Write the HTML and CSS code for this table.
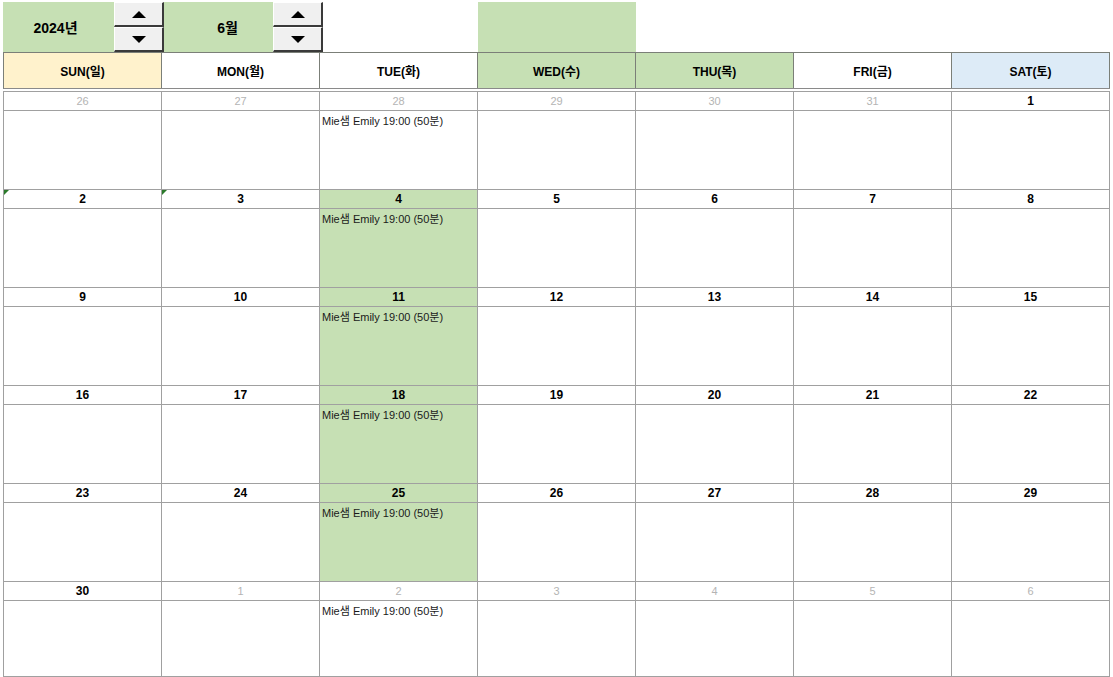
FILE: index.html
```html
<!DOCTYPE html>
<html lang="ko">
<head>
<meta charset="utf-8">
<title>Calendar</title>
<link rel="stylesheet" href="styles.css">
</head>
<body>
<div class="page">
  <div class="top">
    <div class="sel year">2024년</div>
    <div class="spin">
      <div class="btn"><span class="tri up"></span></div>
      <div class="btn"><span class="tri down"></span></div>
    </div>
    <div class="sel month">6월</div>
    <div class="spin">
      <div class="btn"><span class="tri up"></span></div>
      <div class="btn"><span class="tri down"></span></div>
    </div>
    <div class="spacer"></div>
    <div class="sel blank"></div>
  </div>

  <div class="days">
    <div class="day sun">SUN(일)</div>
    <div class="day">MON(월)</div>
    <div class="day">TUE(화)</div>
    <div class="day green">WED(수)</div>
    <div class="day green">THU(목)</div>
    <div class="day">FRI(금)</div>
    <div class="day sat">SAT(토)</div>
  </div>

  <div class="cal">
    <!-- week 1 -->
    <div class="cell"><div class="d other">26</div><div class="b"></div></div>
    <div class="cell"><div class="d other">27</div><div class="b"></div></div>
    <div class="cell"><div class="d other">28</div><div class="b"><span class="ev">Mie샘 Emily 19:00 (50분)</span></div></div>
    <div class="cell"><div class="d other">29</div><div class="b"></div></div>
    <div class="cell"><div class="d other">30</div><div class="b"></div></div>
    <div class="cell"><div class="d other">31</div><div class="b"></div></div>
    <div class="cell"><div class="d">1</div><div class="b"></div></div>
    <!-- week 2 -->
    <div class="cell"><div class="d mark">2</div><div class="b"></div></div>
    <div class="cell"><div class="d mark">3</div><div class="b"></div></div>
    <div class="cell hl"><div class="d">4</div><div class="b"><span class="ev">Mie샘 Emily 19:00 (50분)</span></div></div>
    <div class="cell"><div class="d">5</div><div class="b"></div></div>
    <div class="cell"><div class="d">6</div><div class="b"></div></div>
    <div class="cell"><div class="d">7</div><div class="b"></div></div>
    <div class="cell"><div class="d">8</div><div class="b"></div></div>
    <!-- week 3 -->
    <div class="cell"><div class="d">9</div><div class="b"></div></div>
    <div class="cell"><div class="d">10</div><div class="b"></div></div>
    <div class="cell hl"><div class="d">11</div><div class="b"><span class="ev">Mie샘 Emily 19:00 (50분)</span></div></div>
    <div class="cell"><div class="d">12</div><div class="b"></div></div>
    <div class="cell"><div class="d">13</div><div class="b"></div></div>
    <div class="cell"><div class="d">14</div><div class="b"></div></div>
    <div class="cell"><div class="d">15</div><div class="b"></div></div>
    <!-- week 4 -->
    <div class="cell"><div class="d">16</div><div class="b"></div></div>
    <div class="cell"><div class="d">17</div><div class="b"></div></div>
    <div class="cell hl"><div class="d">18</div><div class="b"><span class="ev">Mie샘 Emily 19:00 (50분)</span></div></div>
    <div class="cell"><div class="d">19</div><div class="b"></div></div>
    <div class="cell"><div class="d">20</div><div class="b"></div></div>
    <div class="cell"><div class="d">21</div><div class="b"></div></div>
    <div class="cell"><div class="d">22</div><div class="b"></div></div>
    <!-- week 5 -->
    <div class="cell"><div class="d">23</div><div class="b"></div></div>
    <div class="cell"><div class="d">24</div><div class="b"></div></div>
    <div class="cell hl"><div class="d">25</div><div class="b"><span class="ev">Mie샘 Emily 19:00 (50분)</span></div></div>
    <div class="cell"><div class="d">26</div><div class="b"></div></div>
    <div class="cell"><div class="d">27</div><div class="b"></div></div>
    <div class="cell"><div class="d">28</div><div class="b"></div></div>
    <div class="cell"><div class="d">29</div><div class="b"></div></div>
    <!-- week 6 -->
    <div class="cell last"><div class="d">30</div><div class="b"></div></div>
    <div class="cell last"><div class="d other">1</div><div class="b"></div></div>
    <div class="cell last"><div class="d other">2</div><div class="b"><span class="ev">Mie샘 Emily 19:00 (50분)</span></div></div>
    <div class="cell last"><div class="d other">3</div><div class="b"></div></div>
    <div class="cell last"><div class="d other">4</div><div class="b"></div></div>
    <div class="cell last"><div class="d other">5</div><div class="b"></div></div>
    <div class="cell last"><div class="d other">6</div><div class="b"></div></div>
  </div>
</div>
</body>
</html>
```

FILE: styles.css
```css
html, body {
  margin: 0;
  padding: 0;
  background: #ffffff;
}
body {
  font-family: "Liberation Sans", "Noto Sans CJK KR", Arial, sans-serif;
  color: #000;
  overflow: hidden;
}
.page {
  width: 1113px;
  height: 677px;
  overflow: hidden;
}

/* top selector row */
.top {
  display: flex;
  height: 50px;
  padding: 2px 0 0 3px;
}
.sel {
  background: #c6e0b4;
  display: flex;
  align-items: center;
  justify-content: center;
  font-weight: bold;
  font-size: 14px;
  box-sizing: border-box;
}
.year { width: 111px; padding-right: 6px; }
.month { width: 109px; padding-left: 18px; }
.blank { width: 158px; }
.spacer { width: 155px; }
.spin {
  width: 50px;
  display: flex;
  flex-direction: column;
}
.btn {
  flex: 1;
  background: #f0f0f0;
  border-top: 1px solid #ffffff;
  border-left: 1px solid #ffffff;
  border-right: 2px solid #3a3a3a;
  border-bottom: 2px solid #3a3a3a;
  box-sizing: border-box;
  display: flex;
  align-items: center;
  justify-content: center;
}
.tri {
  width: 0;
  height: 0;
  border-left: 7px solid transparent;
  border-right: 7px solid transparent;
}
.tri.up { border-bottom: 7px solid #000; }
.tri.down { border-top: 7px solid #000; }

/* day header */
.days {
  display: grid;
  grid-template-columns: repeat(7, 158px);
  margin-left: 3px;
  border-top: 1px solid #7b7f78;
  border-left: 1px solid #7b7f78;
  border-bottom: 1px solid #8a8a8a;
  width: max-content;
}
.day {
  height: 35px;
  border-right: 1px solid #7b7f78;
  display: flex;
  align-items: center;
  justify-content: center;
  font-weight: bold;
  font-size: 12px;
  background: #ffffff;
}
.day.sun { background: #fff2cc; }
.day.green { background: #c6e0b4; }
.day.sat { background: #ddebf7; }

/* calendar grid */
.cal {
  display: grid;
  grid-template-columns: repeat(7, 158px);
  margin-top: 2px;
  margin-left: 3px;
  border-top: 1px solid #a0a0a0;
  border-left: 1px solid #a0a0a0;
  width: max-content;
}
.cell {
  border-right: 1px solid #a0a0a0;
  display: flex;
  flex-direction: column;
  background: #ffffff;
}
.cell.hl { background: #c6e0b4; }
.d {
  height: 18px;
  border-bottom: 1px solid #a0a0a0;
  display: flex;
  align-items: center;
  justify-content: center;
  font-size: 12px;
  font-weight: bold;
  position: relative;
}
.d.other {
  font-weight: normal;
  color: #b4b4b4;
  font-size: 11px;
}
.d.mark::before {
  content: "";
  position: absolute;
  left: 0;
  top: 0;
  width: 0;
  height: 0;
  border-top: 5px solid #2b7a2b;
  border-right: 5px solid transparent;
}
.b {
  height: 79px;
  border-bottom: 1px solid #a0a0a0;
  padding: 0 0 0 2px;
  box-sizing: border-box;
}
.cell.last .b { height: 76px; }
.ev {
  font-size: 11px;
  color: #1a1a1a;
  white-space: nowrap;
}
```
